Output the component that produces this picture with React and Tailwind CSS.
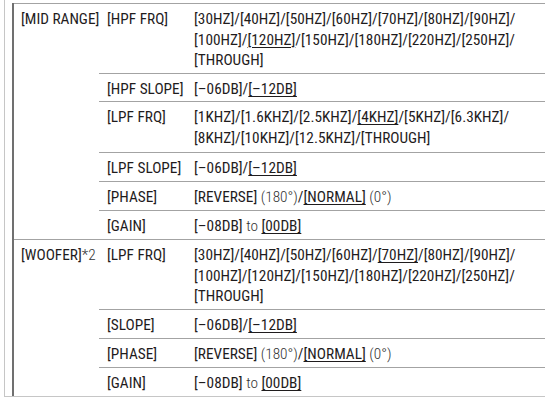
const U = ({ children }) => <span className="underline underline-offset-[2px] decoration-1">{children}</span>
const L = ({ children }) => <span className="font-light text-[#333]">{children}</span>

const GROUPS = [
  {
    name: <>[MID RANGE]</>,
    rows: [
      { h: 'h-[70px]', label: '[HPF FRQ]', value: <>[30HZ]/[40HZ]/[50HZ]/[60HZ]/[70HZ]/[80HZ]/[90HZ]/<br />[100HZ]/<U>[120HZ]</U>/[150HZ]/[180HZ]/[220HZ]/[250HZ]/<br />[THROUGH]</> },
      { h: 'h-[28px]', label: '[HPF SLOPE]', value: <>[–06DB]/<U>[–12DB]</U></> },
      { h: 'h-[51px]', label: '[LPF FRQ]', value: <>[1KHZ]/[1.6KHZ]/[2.5KHZ]/<U>[4KHZ]</U>/[5KHZ]/[6.3KHZ]/<br />[8KHZ]/[10KHZ]/[12.5KHZ]/[THROUGH]</> },
      { h: 'h-[29px]', label: '[LPF SLOPE]', value: <>[–06DB]/<U>[–12DB]</U></> },
      { h: 'h-[29px]', label: '[PHASE]', value: <>[REVERSE] <L>(180°)</L>/<U>[NORMAL]</U> <L>(0°)</L></> },
      { h: 'h-[29px]', label: '[GAIN]', value: <>[–08DB] <L>to</L> <U>[00DB]</U></> },
    ],
  },
  {
    name: <>[WOOFER]<L>*2</L></>,
    rows: [
      { h: 'h-[70px]', label: '[LPF FRQ]', value: <>[30HZ]/[40HZ]/[50HZ]/[60HZ]/<U>[70HZ]</U>/[80HZ]/[90HZ]/<br />[100HZ]/[120HZ]/[150HZ]/[180HZ]/[220HZ]/[250HZ]/<br />[THROUGH]</> },
      { h: 'h-[29px]', label: '[SLOPE]', value: <>[–06DB]/<U>[–12DB]</U></> },
      { h: 'h-[29px]', label: '[PHASE]', value: <>[REVERSE] <L>(180°)</L>/<U>[NORMAL]</U> <L>(0°)</L></> },
      { h: 'h-[29px]', label: '[GAIN]', value: <>[–08DB] <L>to</L> <U>[00DB]</U></> },
    ],
  },
]

export default function App() {
  return (
    <div className="w-[550px] h-[401px] bg-white text-[#1f1c1d] text-[15.3px] leading-[20.5px]"
      style={{ fontFamily: '"Roboto Condensed", "Liberation Sans", sans-serif' }}>
      <div className="ml-[4px] w-[541px] border-l border-b border-[#c6c6c6] pt-[3px] pl-[7px]">
        <div className="border-l-2 border-[#707070]">
          {GROUPS.map((g, gi) => (
            <div key={gi} className="flex">
              <div className="w-[85px] shrink-0 border-t border-[#a3a3a3] pl-[7px] pt-[5px] whitespace-nowrap">{g.name}</div>
              <div className="flex-1 flex flex-col">
                {g.rows.map((r, ri) => (
                  <div key={ri} className={`${r.h} flex border-t border-[#a3a3a3] pt-[5px]`}>
                    <div className="w-[95px] shrink-0 pl-[8px] whitespace-nowrap">{r.label}</div>
                    <div className="flex-1 whitespace-nowrap">{r.value}</div>
                  </div>
                ))}
              </div>
            </div>
          ))}
        </div>
      </div>
    </div>
  )
}
